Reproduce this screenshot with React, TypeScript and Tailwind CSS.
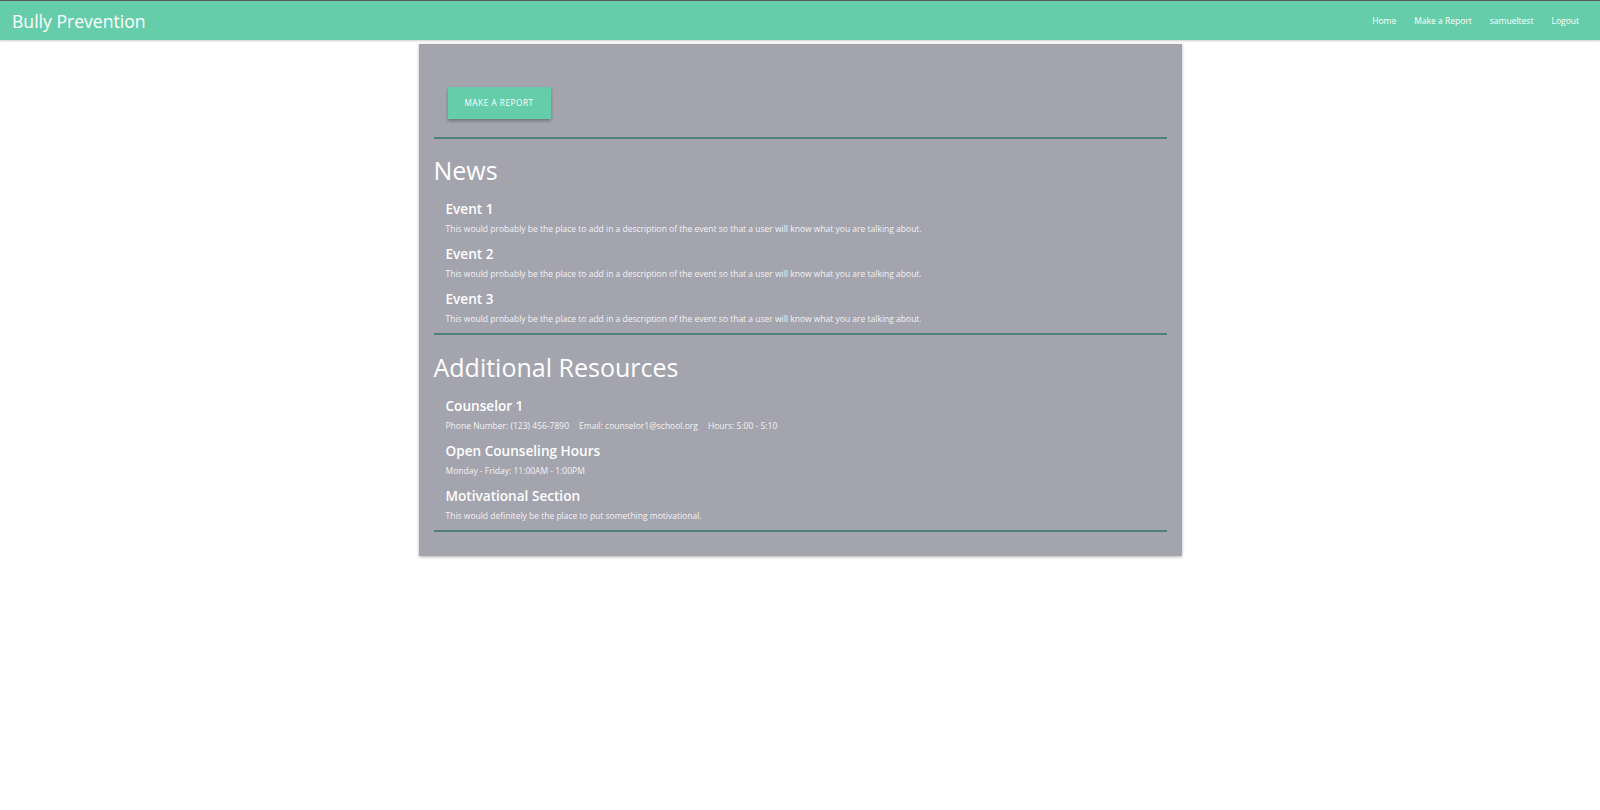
import React from 'react';

const events = [
  { title: 'Event 1', text: 'This would probably be the place to add in a description of the event so that a user will know what you are talking about.' },
  { title: 'Event 2', text: 'This would probably be the place to add in a description of the event so that a user will know what you are talking about.' },
  { title: 'Event 3', text: 'This would probably be the place to add in a description of the event so that a user will know what you are talking about.' },
];

function Item({ title, children }: { title: string; children: React.ReactNode }) {
  return (
    <div className="pl-3">
      <div className="text-[13.6px] leading-[20px] font-semibold text-white">{title}</div>
      <div className="mt-1 text-[8.5px] leading-[12px] text-[#f2f2f4]">{children}</div>
    </div>
  );
}

export default function App() {
  return (
    <div className="min-h-[810px] bg-white" style={{ fontFamily: '"Open Sans", "Noto Sans", sans-serif' }}>
      {/* Navbar */}
      <header className="h-[40px] border-t border-[#5a5a5a] bg-[#66cdaa] shadow-[0_1px_2px_rgba(0,0,0,0.2)] flex items-center justify-between pl-3 pr-[21px] pt-[2px]">
        <span className="text-[17.6px] text-white">Bully Prevention</span>
        <nav className="flex items-center gap-[18px] text-[8.5px] text-white">
          <a href="#">Home</a>
          <a href="#">Make a Report</a>
          <a href="#">samueltest</a>
          <a href="#">Logout</a>
        </nav>
      </header>

      {/* Main card */}
      <main className="w-[763px] mx-auto mt-[4px] bg-[#a4a4ae] shadow-[0_1px_3px_rgba(0,0,0,0.3)] px-[15px] pt-[43px] pb-[24px]">
        <div className="pl-[14px]">
          <button className="w-[103px] h-[32px] bg-[#66cdaa] text-white text-[8.2px] tracking-[0.55px] uppercase shadow-[0_2px_3px_rgba(0,0,0,0.3)]">
            Make a Report
          </button>
        </div>
        <hr className="mt-[18px] border-0 h-[2px] bg-[#4f7e7e]" />

        <h1 className="mt-[17px] text-[25px] leading-[29px] text-white">News</h1>
        <div className="mt-[14px] flex flex-col gap-[9px]">
          {events.map((e) => (
            <Item key={e.title} title={e.title}>{e.text}</Item>
          ))}
        </div>
        <hr className="mt-[8px] border-0 h-[2px] bg-[#4f7e7e]" />

        <h1 className="mt-[18px] text-[25px] leading-[29px] text-white">Additional Resources</h1>
        <div className="mt-[14px] flex flex-col gap-[9px]">
          <Item title="Counselor 1">
            <span className="mr-[10px]">Phone Number: (123) 456-7890</span>
            <span className="mr-[10px]">Email: counselor1@school.org</span>
            <span>Hours: 5:00 - 5:10</span>
          </Item>
          <Item title="Open Counseling Hours">Monday - Friday: 11:00AM - 1:00PM</Item>
          <Item title="Motivational Section">This would definitely be the place to put something motivational.</Item>
        </div>
        <hr className="mt-[8px] border-0 h-[2px] bg-[#4f7e7e]" />
      </main>
    </div>
  );
}
